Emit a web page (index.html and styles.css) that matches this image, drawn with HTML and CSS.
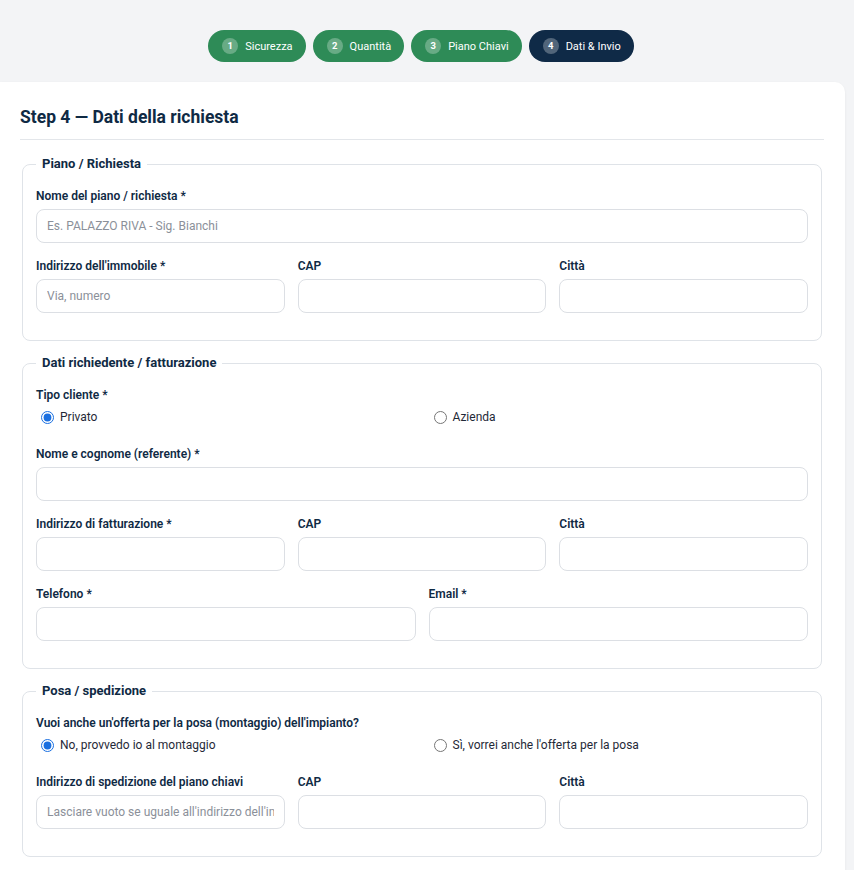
FILE: index.html
```html
<!DOCTYPE html>
<html lang="it">
<head>
<meta charset="utf-8">
<title>Step 4 — Dati della richiesta</title>
<link rel="stylesheet" href="styles.css">
</head>
<body>
<nav class="stepper">
  <span class="step done"><span class="num">1</span>Sicurezza</span>
  <span class="step done"><span class="num">2</span>Quantità</span>
  <span class="step done"><span class="num">3</span>Piano Chiavi</span>
  <span class="step active"><span class="num">4</span>Dati &amp; Invio</span>
</nav>

<main class="card">
  <h2 class="title">Step 4 — Dati della richiesta</h2>

  <fieldset class="group">
    <legend>Piano / Richiesta</legend>
    <div class="field">
      <label class="lbl">Nome del piano / richiesta *</label>
      <input class="inp" type="text" placeholder="Es. PALAZZO RIVA - Sig. Bianchi">
    </div>
    <div class="row three">
      <div class="field">
        <label class="lbl">Indirizzo dell'immobile *</label>
        <input class="inp" type="text" placeholder="Via, numero">
      </div>
      <div class="field">
        <label class="lbl">CAP</label>
        <input class="inp" type="text">
      </div>
      <div class="field">
        <label class="lbl">Città</label>
        <input class="inp" type="text">
      </div>
    </div>
  </fieldset>

  <fieldset class="group">
    <legend>Dati richiedente / fatturazione</legend>
    <div class="field radio-field">
      <label class="lbl">Tipo cliente *</label>
      <div class="radios">
        <label class="opt"><input type="radio" name="tipo" checked> Privato</label>
        <label class="opt"><input type="radio" name="tipo"> Azienda</label>
      </div>
    </div>
    <div class="field">
      <label class="lbl">Nome e cognome (referente) *</label>
      <input class="inp" type="text">
    </div>
    <div class="row three">
      <div class="field">
        <label class="lbl">Indirizzo di fatturazione *</label>
        <input class="inp" type="text">
      </div>
      <div class="field">
        <label class="lbl">CAP</label>
        <input class="inp" type="text">
      </div>
      <div class="field">
        <label class="lbl">Città</label>
        <input class="inp" type="text">
      </div>
    </div>
    <div class="row two">
      <div class="field">
        <label class="lbl">Telefono *</label>
        <input class="inp" type="text">
      </div>
      <div class="field">
        <label class="lbl">Email *</label>
        <input class="inp" type="text">
      </div>
    </div>
  </fieldset>

  <fieldset class="group">
    <legend>Posa / spedizione</legend>
    <div class="field radio-field">
      <label class="lbl">Vuoi anche un'offerta per la posa (montaggio) dell'impianto?</label>
      <div class="radios">
        <label class="opt"><input type="radio" name="posa" checked> No, provvedo io al montaggio</label>
        <label class="opt"><input type="radio" name="posa"> Sì, vorrei anche l'offerta per la posa</label>
      </div>
    </div>
    <div class="row three">
      <div class="field">
        <label class="lbl">Indirizzo di spedizione del piano chiavi</label>
        <input class="inp" type="text" placeholder="Lasciare vuoto se uguale all'indirizzo dell'immobile">
      </div>
      <div class="field">
        <label class="lbl">CAP</label>
        <input class="inp" type="text">
      </div>
      <div class="field">
        <label class="lbl">Città</label>
        <input class="inp" type="text">
      </div>
    </div>
  </fieldset>
</main>
</body>
</html>
```

FILE: styles.css
```css
* { box-sizing: border-box; }

html, body { height: 100%; }

body {
  margin: 0;
  background: #f3f4f6;
  font-family: Roboto, "Liberation Sans", Arial, sans-serif;
  color: #0f2a44;
  overflow: hidden;
}

.stepper {
  display: flex;
  justify-content: center;
  gap: 7px;
  padding: 30px 12px 0 0;
  height: 82px;
}

.step {
  display: inline-flex;
  align-items: center;
  gap: 7px;
  height: 32px;
  padding: 0 13px 0 14px;
  border-radius: 16px;
  color: #fff;
  font-size: 11px;
  line-height: 1;
}

.step.done { background: #2e8b57; }
.step.active { background: #0f2a47; }

.num {
  display: inline-flex;
  align-items: center;
  justify-content: center;
  width: 16px;
  height: 16px;
  border-radius: 50%;
  background: rgba(255, 255, 255, 0.28);
  font-size: 9.5px;
  font-weight: 700;
}

.card {
  background: #fff;
  margin-right: 9px;
  border-radius: 0 10px 10px 0;
  box-shadow: 0 1px 3px rgba(15, 23, 42, 0.06);
  padding: 24px 21px 30px 20px;
  min-height: 800px;
}

.title {
  margin: 0 0 15px;
  padding-bottom: 11px;
  border-bottom: 1px solid #e3e6ea;
  font-size: 17.5px;
  line-height: 22px;
  font-weight: 700;
  color: #0f2a44;
}

.group {
  margin: 0 2px 13px;
  padding: 15px 13px 27px;
  border: 1px solid #dfe3e8;
  border-radius: 8px;
}

.group legend {
  padding: 0 6px;
  font-size: 13px;
  line-height: 18px;
  font-weight: 700;
  color: #0f2a44;
}

.field {
  display: flex;
  flex-direction: column;
  margin-bottom: 15px;
}

.group > .field:last-child,
.group > .row:last-child .field { margin-bottom: 0; }

.lbl {
  font-size: 12px;
  line-height: 17px;
  font-weight: 600;
  color: #0f2a44;
  margin-bottom: 4px;
  white-space: nowrap;
}

.inp {
  height: 34px;
  width: 100%;
  border: 1px solid #dcdfe4;
  border-radius: 8px;
  padding: 0 10px;
  font-family: inherit;
  font-size: 12px;
  color: #1f2937;
  background: #fff;
}

.inp::placeholder { color: #8b9099; }

.row {
  display: grid;
  gap: 13px;
}

.row.three { grid-template-columns: 1fr 1fr 1fr; }
.row.two { grid-template-columns: 1fr 1fr; }

.radio-field { margin-bottom: 20px; }

.radios {
  display: grid;
  grid-template-columns: 1fr 1fr;
  gap: 13px;
  height: 18px;
  align-items: center;
}

.opt {
  display: flex;
  align-items: center;
  font-size: 12px;
  color: #1f2937;
}

.opt input {
  margin: 0 6px 0 5px;
  width: 13px;
  height: 13px;
  accent-color: #1a6fe0;
}
```
